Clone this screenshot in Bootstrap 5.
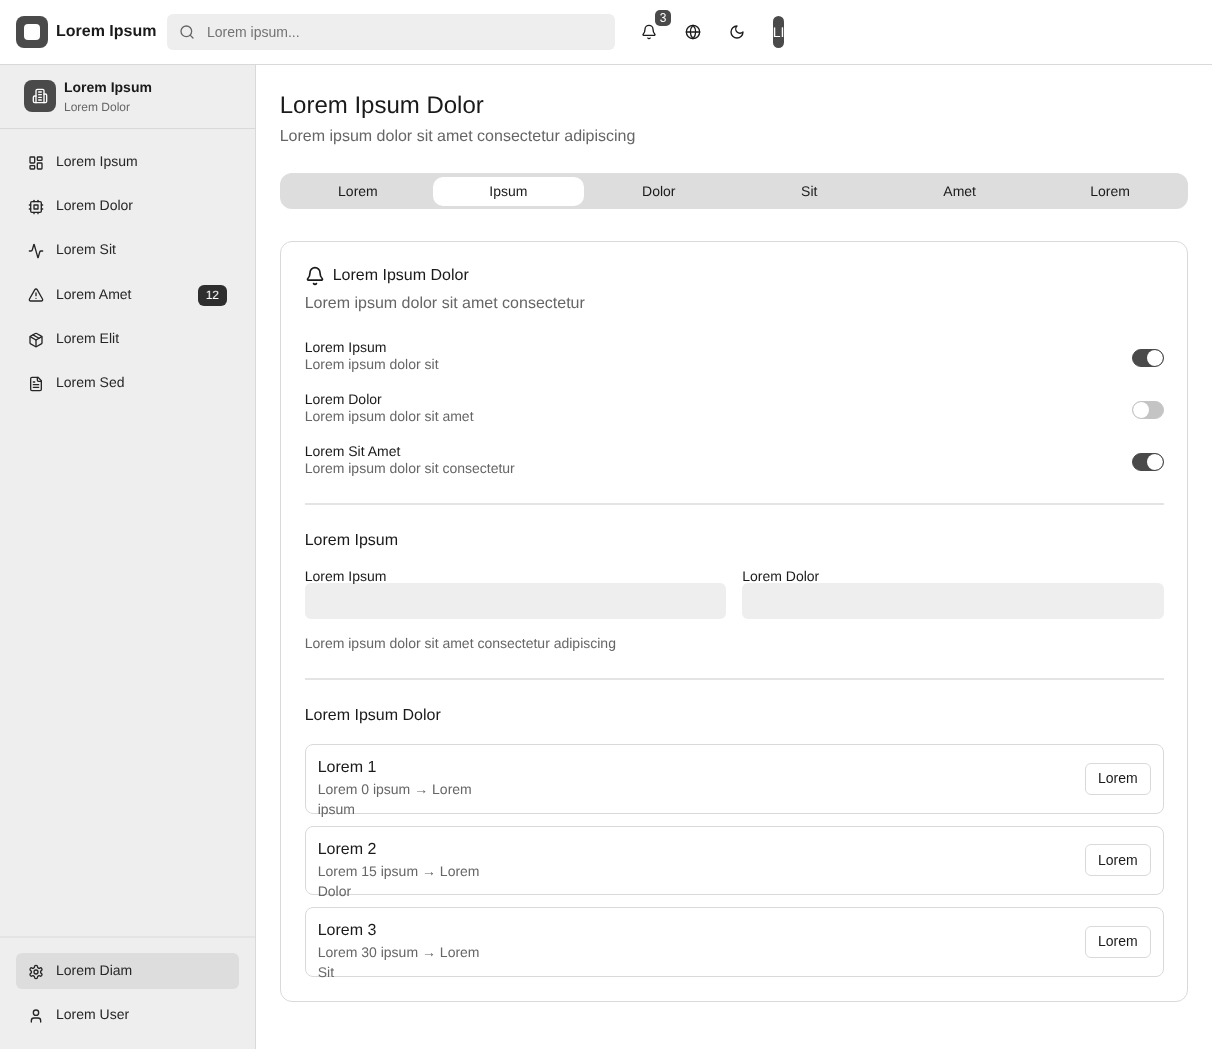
<!DOCTYPE html>
<html lang="en">
<head>
  <meta charset="UTF-8">
  <title>Lorem Ipsum</title>
  <meta name="viewport" content="width=device-width, initial-scale=1">
  <link href="https://cdn.jsdelivr.net/npm/bootstrap@5.3.0/dist/css/bootstrap.min.css" rel="stylesheet">
  <style>
    body {
      font-family: "Liberation Sans", Arial, sans-serif;
      color: #1a1a1a;
      background: #fff;
      font-size: 14px;
      text-rendering: geometricPrecision;
      filter: grayscale(1);
    }
    .ico {
      width: 16px;
      height: 16px;
      fill: none;
      stroke: currentColor;
      stroke-width: 2;
      stroke-linecap: round;
      stroke-linejoin: round;
      flex-shrink: 0;
    }
    .topbar {
      height: 65px;
      padding: 0 16px;
      border-bottom: 1px solid #d9d9d9;
    }
    .logo-box {
      width: 32px;
      height: 32px;
      border-radius: 8px;
      background: #4a4a4a;
    }
    .logo-inner {
      width: 16px;
      height: 16px;
      border-radius: 4px;
      background: #fff;
    }
    .brand-name {
      font-size: 16px;
      font-weight: 700;
      margin-left: 8px;
      width: 111px;
    }
    .search-box {
      width: 448px;
      height: 36px;
      border-radius: 6px;
      background: #eee;
      color: #666;
      padding-left: 12px;
      gap: 12px;
    }
    .search-box input {
      border: 0;
      outline: 0;
      background: transparent;
      padding: 0;
      font-size: 14px;
      flex: 1;
      color: #666;
    }
    .search-box input::placeholder { color: #737373; opacity: 1; }
    .top-actions { margin-left: 18px; }
    .top-btn {
      width: 32px;
      height: 32px;
      padding: 0;
      border: 0;
      background: transparent;
      color: #1a1a1a;
    }
    .count-pill {
      top: -6px;
      right: -6px;
      width: 16px;
      height: 16px;
      border-radius: 5px;
      background: #4a4a4a;
      color: #fff;
      font-size: 12px;
      line-height: 16px;
      text-align: center;
    }
    .avatar-pill {
      width: 11px;
      height: 32px;
      margin-left: 12px;
      border-radius: 6px;
      background: #4a4a4a;
      color: #fff;
      font-size: 14px;
      line-height: 32px;
      white-space: nowrap;
    }
    .page-body { min-height: 984px; }
    .side {
      width: 256px;
      flex-shrink: 0;
      background: #eee;
      border-right: 1px solid #d9d9d9;
    }
    .side-head {
      height: 64px;
      padding: 0 24px 1px;
      gap: 8px;
      border-bottom: 1px solid #d9d9d9;
    }
    .side-title { font-weight: 700; line-height: 20px; }
    .side-sub { font-size: 12px; line-height: 16px; color: #666; margin-top: 2px; }
    .side-nav { padding: 15px 16px 16px; gap: 8px; }
    .side-foot { padding: 15px 16px 16px; gap: 8px; border-top: 2px solid #e4e4e4; }
    .side-link {
      gap: 12px;
      padding: 8px 12px;
      border-radius: 6px;
      color: #262626;
      text-decoration: none;
      line-height: 20px;
    }
    .side-link .ico { margin-top: 1px; }
    .side-link > span:not(.side-count) { line-height: 18px; padding-bottom: 2px; }
    .side-link.on { background: #ddd; }
    .side-count {
      padding: 0 8px;
      height: 21px;
      line-height: 21px;
      font-size: 12px;
      border-radius: 6px;
      background: #2e2e2e;
      color: #fff;
      transform: translateY(1px);
    }
    .main-col { padding: 24px 23.7px; }
    .page-title { font-size: 24px; font-weight: 400; line-height: 32px; margin: 1px 0 0; }
    .page-sub { font-size: 16px; line-height: 24px; color: #666; margin: 3px 0 0; }
    .tab-strip {
      margin-top: 24px;
      height: 36px;
      padding: 3.5px 3px;
      border-radius: 12px;
      background: #ddd;
    }
    .tab-strip .nav-item { flex: 1 1 0; }
    .tab-strip .nav-link {
      width: 100%;
      height: 29px;
      padding: 0;
      border-radius: 10px;
      font-size: 14px;
      line-height: 29px;
      text-align: center;
      color: #1a1a1a;
    }
    .tab-strip .nav-link.active { background: #fff; color: #1a1a1a; }
    .main-card {
      margin-top: 32px;
      padding: 23.5px 23.5px 24px 24px;
      border: 1px solid #d9d9d9;
      border-radius: 12px;
    }
    .card-head { font-size: 16px; line-height: 20px; gap: 8px; }
    .card-head .ico { width: 20px; height: 20px; }
    .card-desc { font-size: 16px; line-height: 24px; color: #666; margin: 6px 0 0; }
    .set-rows { margin-top: 23.5px; gap: 18px; }
    .set-rows .line-one { line-height: 17px; }
    .set-rows .line-two { line-height: 17px; color: #666; }
    .sw-wrap { min-height: 0; height: 34px; }
    .form-switch .form-check-input.sw {
      width: 32px;
      height: 18px;
      margin: 10px 0 0;
      float: none;
      border: 1px solid #4a4a4a;
      background-color: #4a4a4a;
      box-shadow: none;
      background-position: right center;
      background-image: url("data:image/svg+xml,%3csvg xmlns='http://www.w3.org/2000/svg' viewBox='-4 -4 8 8'%3e%3ccircle r='4' fill='%23fff'/%3e%3c/svg%3e");
    }
    .form-switch .form-check-input.sw:not(:checked) {
      border-color: #c4c4c4;
      background-color: #c4c4c4;
      background-position: left center;
    }
    .rule { height: 2px; background: #e4e4e4; }
    .rule-a { margin: 26px 0 0; }
    .rule-b { margin: 25px 0 0; }
    .sect-title { font-size: 16px; line-height: 24px; margin: 24px 0 0; }
    .field-row { margin-top: 16px; gap: 16px; }
    .field-label { display: block; margin: 0; line-height: 14px; height: 14px; }
    .field-input {
      height: 36px;
      border: 0;
      border-radius: 6px;
      background: #eee;
    }
    .field-input:focus { background: #eee; box-shadow: none; }
    .help-line { color: #666; line-height: 20px; margin: 14px 0 0; }
    .plan-list { margin-top: 16px; gap: 12px; }
    .plan-row {
      height: 69.5px;
      padding: 0 12px;
      border: 1px solid #d9d9d9;
      border-radius: 8px;
    }
    .plan-text { width: 180px; align-self: flex-start; padding-top: 12px; }
    .plan-name { font-size: 16px; line-height: 22px; }
    .plan-note { line-height: 20px; color: #666; }
    .plan-btn {
      width: 66px;
      height: 32px;
      padding: 0;
      font-size: 14px;
      color: #1a1a1a;
      border: 1px solid #d9d9d9;
      border-radius: 6px;
      background: #fff;
    }
  </style>
</head>
<body>
  <svg width="0" height="0" class="d-block position-absolute">
    <symbol id="i-search" viewBox="0 0 24 24"><circle cx="11" cy="11" r="8"/><path d="m21 21-4.3-4.3"/></symbol>
    <symbol id="i-bell" viewBox="0 0 24 24"><path d="M10.268 21a2 2 0 0 0 3.464 0"/><path d="M3.262 15.326A1 1 0 0 0 4 17h16a1 1 0 0 0 .74-1.673C19.41 13.956 18 12.499 18 8A6 6 0 0 0 6 8c0 4.499-1.411 5.956-2.738 7.326"/></symbol>
    <symbol id="i-globe" viewBox="0 0 24 24"><circle cx="12" cy="12" r="10"/><path d="M12 2a14.5 14.5 0 0 0 0 20 14.5 14.5 0 0 0 0-20"/><path d="M2 12h20"/></symbol>
    <symbol id="i-moon" viewBox="0 0 24 24"><path d="M12 3a6 6 0 0 0 9 9 9 9 0 1 1-9-9Z"/></symbol>
    <symbol id="i-building" viewBox="0 0 24 24"><path d="M6 22V4a2 2 0 0 1 2-2h8a2 2 0 0 1 2 2v18Z"/><path d="M6 12H4a2 2 0 0 0-2 2v6a2 2 0 0 0 2 2h2"/><path d="M18 9h2a2 2 0 0 1 2 2v9a2 2 0 0 1-2 2h-2"/><path d="M10 6h4"/><path d="M10 10h4"/><path d="M10 14h4"/><path d="M10 18h4"/></symbol>
    <symbol id="i-dash" viewBox="0 0 24 24"><rect x="3" y="3" width="7" height="9" rx="1"/><rect x="14" y="3" width="7" height="5" rx="1"/><rect x="14" y="12" width="7" height="9" rx="1"/><rect x="3" y="16" width="7" height="5" rx="1"/></symbol>
    <symbol id="i-cpu" viewBox="0 0 24 24"><rect x="4" y="4" width="16" height="16" rx="2"/><rect x="9" y="9" width="6" height="6"/><path d="M15 2v2"/><path d="M15 20v2"/><path d="M2 15h2"/><path d="M2 9h2"/><path d="M20 15h2"/><path d="M20 9h2"/><path d="M9 2v2"/><path d="M9 20v2"/></symbol>
    <symbol id="i-activity" viewBox="0 0 24 24"><path d="M22 12h-2.48a2 2 0 0 0-1.93 1.46l-2.35 8.36a.25.25 0 0 1-.48 0L9.24 2.18a.25.25 0 0 0-.48 0l-2.35 8.36A2 2 0 0 1 4.49 12H2"/></symbol>
    <symbol id="i-alert" viewBox="0 0 24 24"><path d="m21.73 18-8-14a2 2 0 0 0-3.48 0l-8 14A2 2 0 0 0 4 21h16a2 2 0 0 0 1.73-3"/><path d="M12 9v4"/><path d="M12 17h.01"/></symbol>
    <symbol id="i-package" viewBox="0 0 24 24"><path d="M11 21.73a2 2 0 0 0 2 0l7-4A2 2 0 0 0 21 16V8a2 2 0 0 0-1-1.73l-7-4a2 2 0 0 0-2 0l-7 4A2 2 0 0 0 3 8v8a2 2 0 0 0 1 1.73z"/><path d="M12 22V12"/><path d="m3.3 7 8.7 5 8.7-5"/><path d="m7.5 4.27 9 5.15"/></symbol>
    <symbol id="i-file" viewBox="0 0 24 24"><path d="M15 2H6a2 2 0 0 0-2 2v16a2 2 0 0 0 2 2h12a2 2 0 0 0 2-2V7Z"/><path d="M14 2v4a2 2 0 0 0 2 2h4"/><path d="M10 9H8"/><path d="M16 13H8"/><path d="M16 17H8"/></symbol>
    <symbol id="i-gear" viewBox="0 0 24 24"><path d="M12.22 2h-.44a2 2 0 0 0-2 2v.18a2 2 0 0 1-1 1.73l-.43.25a2 2 0 0 1-2 0l-.15-.08a2 2 0 0 0-2.73.73l-.22.38a2 2 0 0 0 .73 2.73l.15.1a2 2 0 0 1 1 1.72v.51a2 2 0 0 1-1 1.74l-.15.09a2 2 0 0 0-.73 2.73l.22.38a2 2 0 0 0 2.73.73l.15-.08a2 2 0 0 1 2 0l.43.25a2 2 0 0 1 1 1.73V20a2 2 0 0 0 2 2h.44a2 2 0 0 0 2-2v-.18a2 2 0 0 1 1-1.73l.43-.25a2 2 0 0 1 2 0l.15.08a2 2 0 0 0 2.73-.73l.22-.39a2 2 0 0 0-.73-2.73l-.15-.08a2 2 0 0 1-1-1.74v-.5a2 2 0 0 1 1-1.74l.15-.09a2 2 0 0 0 .73-2.73l-.22-.38a2 2 0 0 0-2.73-.73l-.15.08a2 2 0 0 1-2 0l-.43-.25a2 2 0 0 1-1-1.73V4a2 2 0 0 0-2-2z"/><circle cx="12" cy="12" r="3"/></symbol>
    <symbol id="i-user" viewBox="0 0 24 24"><path d="M19 21v-2a4 4 0 0 0-4-4H9a4 4 0 0 0-4 4v2"/><circle cx="12" cy="7" r="4"/></symbol>
  </svg>

  <header class="topbar d-flex align-items-center">
    <div class="logo-box d-flex align-items-center justify-content-center"><div class="logo-inner"></div></div>
    <div class="brand-name">Lorem Ipsum</div>
    <div class="search-box d-flex align-items-center">
      <svg class="ico"><use href="#i-search"/></svg>
      <input type="text" placeholder="Lorem ipsum...">
    </div>
    <div class="top-actions d-flex align-items-center gap-2">
      <button class="top-btn position-relative d-flex align-items-center justify-content-center">
        <svg class="ico"><use href="#i-bell"/></svg>
        <span class="count-pill position-absolute">3</span>
      </button>
      <button class="top-btn ms-1 d-flex align-items-center justify-content-center"><svg class="ico"><use href="#i-globe"/></svg></button>
      <button class="top-btn ms-1 d-flex align-items-center justify-content-center"><svg class="ico"><use href="#i-moon"/></svg></button>
      <div class="avatar-pill d-flex justify-content-center">LI</div>
    </div>
  </header>

  <div class="page-body d-flex">
    <aside class="side d-flex flex-column">
      <div class="side-head d-flex align-items-center">
        <div class="logo-box d-flex align-items-center justify-content-center text-white"><svg class="ico"><use href="#i-building"/></svg></div>
        <div>
          <div class="side-title">Lorem Ipsum</div>
          <div class="side-sub">Lorem Dolor</div>
        </div>
      </div>
      <nav class="side-nav d-flex flex-column flex-grow-1">
        <a href="#" class="side-link d-flex align-items-center"><svg class="ico"><use href="#i-dash"/></svg><span>Lorem Ipsum</span></a>
        <a href="#" class="side-link d-flex align-items-center"><svg class="ico"><use href="#i-cpu"/></svg><span>Lorem Dolor</span></a>
        <a href="#" class="side-link d-flex align-items-center"><svg class="ico"><use href="#i-activity"/></svg><span>Lorem Sit</span></a>
        <a href="#" class="side-link d-flex align-items-center"><svg class="ico"><use href="#i-alert"/></svg><span class="flex-grow-1">Lorem Amet</span><span class="side-count">12</span></a>
        <a href="#" class="side-link d-flex align-items-center"><svg class="ico"><use href="#i-package"/></svg><span>Lorem Elit</span></a>
        <a href="#" class="side-link d-flex align-items-center"><svg class="ico"><use href="#i-file"/></svg><span>Lorem Sed</span></a>
      </nav>
      <div class="side-foot d-flex flex-column">
        <a href="#" class="side-link on d-flex align-items-center"><svg class="ico"><use href="#i-gear"/></svg><span>Lorem Diam</span></a>
        <a href="#" class="side-link d-flex align-items-center"><svg class="ico"><use href="#i-user"/></svg><span>Lorem User</span></a>
      </div>
    </aside>

    <main class="main-col flex-grow-1">
      <h1 class="page-title">Lorem Ipsum Dolor</h1>
      <p class="page-sub">Lorem ipsum dolor sit amet consectetur adipiscing</p>

      <ul class="nav tab-strip">
        <li class="nav-item"><a class="nav-link" href="#">Lorem</a></li>
        <li class="nav-item"><a class="nav-link active" href="#">Ipsum</a></li>
        <li class="nav-item"><a class="nav-link" href="#">Dolor</a></li>
        <li class="nav-item"><a class="nav-link" href="#">Sit</a></li>
        <li class="nav-item"><a class="nav-link" href="#">Amet</a></li>
        <li class="nav-item"><a class="nav-link" href="#">Lorem</a></li>
      </ul>

      <section class="main-card">
        <div class="card-head d-flex align-items-center"><svg class="ico"><use href="#i-bell"/></svg><span>Lorem Ipsum Dolor</span></div>
        <p class="card-desc">Lorem ipsum dolor sit amet consectetur</p>

        <div class="set-rows d-flex flex-column">
          <div class="d-flex align-items-center justify-content-between">
            <div><div class="line-one">Lorem Ipsum</div><div class="line-two">Lorem ipsum dolor sit</div></div>
            <div class="form-check form-switch sw-wrap p-0 m-0 d-flex"><input class="form-check-input sw" type="checkbox" role="switch" checked></div>
          </div>
          <div class="d-flex align-items-center justify-content-between">
            <div><div class="line-one">Lorem Dolor</div><div class="line-two">Lorem ipsum dolor sit amet</div></div>
            <div class="form-check form-switch sw-wrap p-0 m-0 d-flex"><input class="form-check-input sw" type="checkbox" role="switch"></div>
          </div>
          <div class="d-flex align-items-center justify-content-between">
            <div><div class="line-one">Lorem Sit Amet</div><div class="line-two">Lorem ipsum dolor sit consectetur</div></div>
            <div class="form-check form-switch sw-wrap p-0 m-0 d-flex"><input class="form-check-input sw" type="checkbox" role="switch" checked></div>
          </div>
        </div>

        <div class="rule rule-a"></div>

        <h2 class="sect-title fw-normal">Lorem Ipsum</h2>
        <div class="field-row d-flex">
          <div class="flex-fill w-50"><label class="field-label">Lorem Ipsum</label><input type="text" class="form-control field-input"></div>
          <div class="flex-fill w-50"><label class="field-label">Lorem Dolor</label><input type="text" class="form-control field-input"></div>
        </div>
        <p class="help-line">Lorem ipsum dolor sit amet consectetur adipiscing</p>

        <div class="rule rule-b"></div>

        <h2 class="sect-title fw-normal">Lorem Ipsum Dolor</h2>
        <div class="plan-list d-flex flex-column">
          <div class="plan-row d-flex align-items-center justify-content-between">
            <div class="plan-text"><div class="plan-name">Lorem 1</div><div class="plan-note">Lorem 0 ipsum → Lorem ipsum</div></div>
            <button class="btn plan-btn">Lorem</button>
          </div>
          <div class="plan-row d-flex align-items-center justify-content-between">
            <div class="plan-text"><div class="plan-name">Lorem 2</div><div class="plan-note">Lorem 15 ipsum → Lorem Dolor</div></div>
            <button class="btn plan-btn">Lorem</button>
          </div>
          <div class="plan-row d-flex align-items-center justify-content-between">
            <div class="plan-text"><div class="plan-name">Lorem 3</div><div class="plan-note">Lorem 30 ipsum → Lorem Sit</div></div>
            <button class="btn plan-btn">Lorem</button>
          </div>
        </div>
      </section>
    </main>
  </div>
</body>
</html>
